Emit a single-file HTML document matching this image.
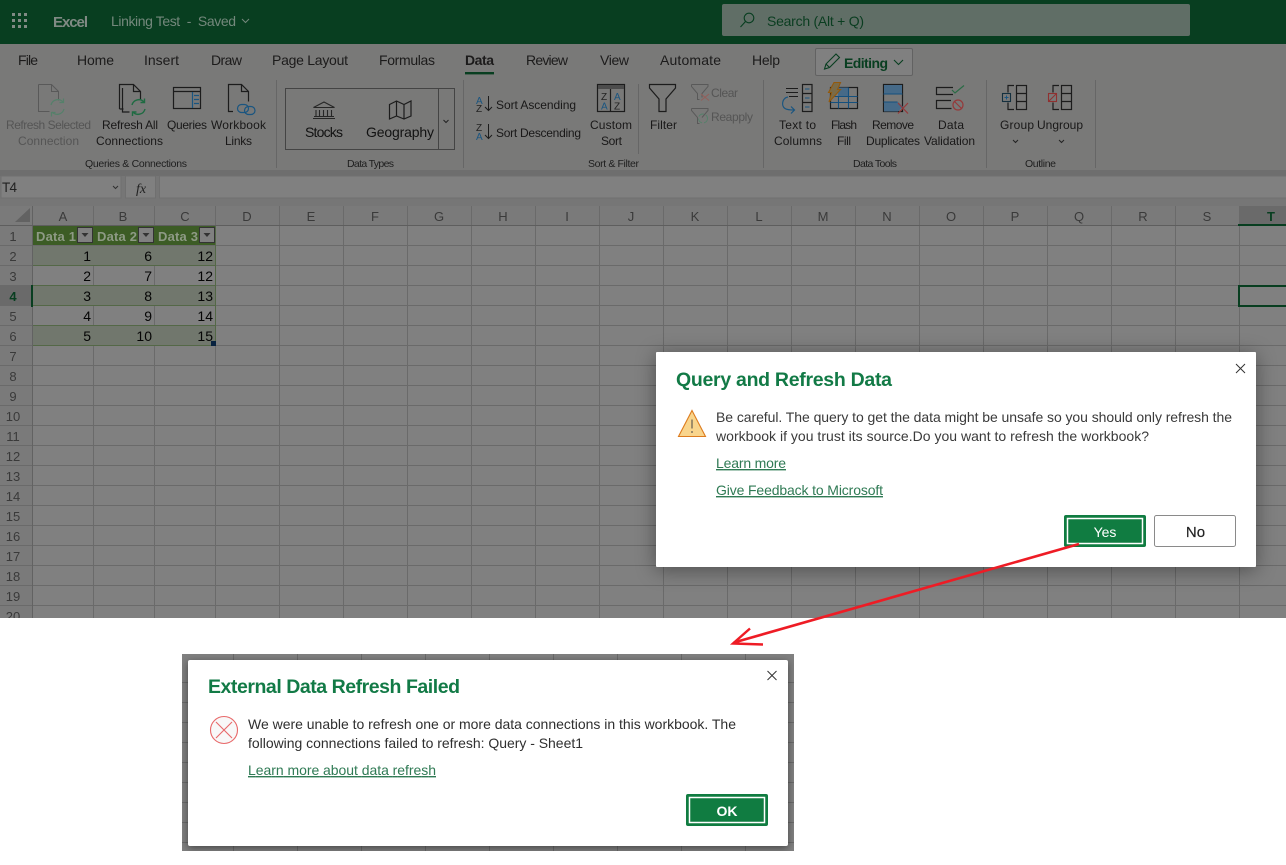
<!DOCTYPE html>
<html><head><meta charset="utf-8"><title>Excel</title>
<style>
html,body{margin:0;padding:0;background:#fff;width:1286px;height:865px;overflow:hidden}
body{position:relative}
svg{display:block;position:absolute;left:0;top:0}
#strip{position:absolute;left:0;top:618px;width:1286px;height:247px;background:#fff}
text{font-family:"Liberation Sans",sans-serif;font-size:12px;fill:#191818;white-space:pre}
.tab{font-size:14px;fill:#1c1b1b}
.dis{fill:#555}
.grp{font-size:10.5px;fill:#1e1e1e}
.big{font-size:14px;fill:#121212}
.h{font-size:13px;fill:#3a3a3a;text-anchor:middle}
.r{font-size:13px;fill:#3a3a3a;text-anchor:middle}
.d{font-size:14px;fill:#050505;text-anchor:end}
.th{font-size:13px;font-weight:bold;fill:#8e9a85}
.title{font-size:19.5px;font-weight:bold;fill:#127a46}
.body{font-size:14px;fill:#3a3a3a}
.lnk{font-size:14px;fill:#2f7a54;text-decoration:underline}
.ln{fill:none;stroke:#1c1c1c;stroke-width:1.2}
.gr{fill:none;stroke:#595959;stroke-width:1}
.dlg{position:absolute;background:#fff;border-radius:1px}
#d1{left:656px;top:352px;width:600px;height:215px;box-shadow:0 3px 20px rgba(0,0,0,.4)}
#w2{position:absolute;left:182px;top:654px;width:612px;height:197px;overflow:hidden;background:#808080}
#d2{left:6px;top:6px;width:600px;height:186px;border-radius:2px;box-shadow:0 2px 8px rgba(0,0,0,.45)}
</style></head><body>
<svg id="page" width="1286" height="865" viewBox="0 0 1286 865" xmlns="http://www.w3.org/2000/svg">
<rect width="1286" height="618" fill="#808080"/>

<!-- top bar -->
<rect width="1286" height="44" fill="#083e20"/>
<g fill="#808a84"><rect x="12" y="13" width="3" height="3"/><rect x="18" y="13" width="3" height="3"/><rect x="24" y="13" width="3" height="3"/><rect x="12" y="19" width="3" height="3"/><rect x="18" y="19" width="3" height="3"/><rect x="24" y="19" width="3" height="3"/><rect x="12" y="25" width="3" height="3"/><rect x="18" y="25" width="3" height="3"/><rect x="24" y="25" width="3" height="3"/></g>
<text x="53" y="27" textLength="35" style="font-size:15px;font-weight:bold;fill:#808a84">Excel</text>
<text x="111" y="26" textLength="125" style="font-size:14px;fill:#74887c">Linking Test  -  Saved</text>
<path d="M242 19l3.5 3.5L249 19" fill="none" stroke="#74887c"/>
<rect x="722" y="4" width="468" height="32" rx="2" fill="#606e66"/>
<circle cx="749" cy="18" r="4.8" fill="none" stroke="#083e20" stroke-width="1.1"/><path d="M745.5 21.5L740.5 27" stroke="#083e20" stroke-width="1.1"/>
<text x="767" y="26" textLength="97" style="font-size:14px;fill:#0a3d20">Search (Alt + Q)</text>

<!-- ribbon -->
<rect y="44" width="1286" height="126" fill="#797978"/>
<rect y="170" width="1286" height="6" fill="#6e6e6e"/>
<rect y="176" width="1286" height="30" fill="#767676"/>
<text class="tab" x="18" y="65" textLength="20">File</text>
<text class="tab" x="77" y="65" textLength="37">Home</text>
<text class="tab" x="144" y="65" textLength="35">Insert</text>
<text class="tab" x="211" y="65" textLength="31">Draw</text>
<text class="tab" x="272" y="65" textLength="76">Page Layout</text>
<text class="tab" x="379" y="65" textLength="56">Formulas</text>
<text class="tab" x="465" y="65" textLength="29" style="font-weight:bold">Data</text>
<rect x="465" y="72" width="29" height="2.4" fill="#083e20"/>
<text class="tab" x="526" y="65" textLength="42">Review</text>
<text class="tab" x="600" y="65" textLength="29">View</text>
<text class="tab" x="660" y="65" textLength="61">Automate</text>
<text class="tab" x="752" y="65" textLength="28">Help</text>
<rect x="815.5" y="48.5" width="97" height="27" rx="1.5" fill="#808080" stroke="#626262"/>
<path d="M824.5 69l1.5-5 10-10 3.5 3.5-10 10zM826 64l3.5 3.5" fill="none" stroke="#083e20" stroke-width="1.1"/>
<text x="844" y="68" textLength="44" style="font-size:14px;font-weight:bold;fill:#083e20">Editing</text>
<path d="M894 60l4.5 4.5L903 60" fill="none" stroke="#083e20" stroke-width="1.1"/>

<path d="M276.5 80v88M463.5 80v88M638.5 84v70M763.5 80v88M986.5 80v88M1095.5 80v88" stroke="#666" fill="none"/>

<!-- Refresh Selected -->
<path class="gr" d="M38.5 84.5h13l7 7v9M51.5 84.5v7h7M38.5 84.5v27h11"/>
<g fill="none" stroke="#55806a" stroke-width="1.2"><path d="M51 105a7 7 0 0 1 12-3M64 109a7 7 0 0 1-12 3"/><path d="M63.5 98.5v4h-4M51.5 116.5v-4h4"/></g>
<text class="dis" x="6" y="129" textLength="85">Refresh Selected</text>
<text class="dis" x="18" y="145" textLength="61">Connection</text>
<!-- Refresh All -->
<path class="ln" d="M122.5 88v24h7M119.5 109V84.5h14l7 7v8M133.5 84.5v7h7M119.5 109h4"/>
<g fill="none" stroke="#1f6b42" stroke-width="1.4"><path d="M132 105a7 7 0 0 1 12-3M145 109a7 7 0 0 1-12 3"/><path d="M144.5 98.5v4h-4M132.5 116v-4h4"/></g>
<text x="102" y="129" textLength="56">Refresh All</text>
<text x="96" y="145" textLength="67">Connections</text>
<!-- Queries -->
<rect x="173.5" y="87.5" width="27" height="21" class="ln"/><path class="ln" d="M173.5 91.5h27"/>
<path d="M192.5 92v16M194 95.5h5M194 99.5h5M194 103.5h5" fill="none" stroke="#1a5580" stroke-width="1.2"/>
<text x="167" y="129" textLength="40">Queries</text>
<!-- Workbook links -->
<path class="ln" d="M233 111.5h-4.5V84.5h13l7 7v10M241.5 84.5v7h7"/>
<g fill="none" stroke="#1a5580" stroke-width="1.2"><rect x="237.5" y="104.5" width="11" height="8" rx="4"/><rect x="244.5" y="106.5" width="10.5" height="8" rx="4"/></g>
<text x="211" y="129" textLength="55">Workbook</text>
<text x="225" y="145" textLength="27">Links</text>
<text class="grp" x="85" y="167" textLength="102">Queries &amp; Connections</text>

<!-- Data types -->
<rect x="285.5" y="88.5" width="169" height="61" fill="none" stroke="#444"/><path d="M438.5 88.5v61" stroke="#444"/>
<path d="M443.5 120l2.500 2.500 2.500-2.500" fill="none" stroke="#222"/>
<path d="M313.5 107.5l10.5-5.5 10.5 5.5zM316 110v6M319.5 110v6M323.5 110v6M327.5 110v6M331.5 110v6M314 116.5h20M313 118.5h22" fill="none" stroke="#262626" stroke-width="1.1"/>
<path class="ln" d="M389.5 104.5l7-3.5 7.5 3.5 7-3.5v15l-7 3-7.5-3-7 3zM396.5 101v15M404 104.5v14.5"/>
<text class="big" x="305" y="137" textLength="38">Stocks</text>
<text class="big" x="366" y="137" textLength="68">Geography</text>
<text class="grp" x="347" y="167" textLength="47">Data Types</text>

<!-- Sort -->
<text x="476" y="104" textLength="7" style="font-size:10px;fill:#1a5580">A</text><text x="476" y="112" textLength="7" style="font-size:10px;fill:#222">Z</text>
<text x="476" y="131" textLength="7" style="font-size:10px;fill:#222">Z</text><text x="476" y="140" textLength="7" style="font-size:10px;fill:#1a5580">A</text>
<path d="M488.5 96v14.5M485 107l3.5 3.5 3.5-3.5M488.5 124v14.5M485 135l3.5 3.5 3.5-3.5" fill="none" stroke="#1c1c1c"/>
<text x="496" y="109" textLength="80">Sort Ascending</text>
<text x="496" y="137" textLength="85">Sort Descending</text>
<rect x="597.5" y="84.5" width="27" height="27" class="ln"/><rect x="598" y="85" width="26" height="4" fill="#4c4c4c"/><path class="ln" d="M610.5 89v22"/>
<text x="601" y="100" style="font-size:10px;fill:#222">Z</text><text x="601" y="109.5" style="font-size:10px;fill:#1a5580">A</text>
<text x="614" y="100" style="font-size:10px;fill:#1a5580">A</text><text x="614" y="109.5" style="font-size:10px;fill:#222">Z</text>
<text x="590" y="129" textLength="42">Custom</text>
<text x="601" y="145" textLength="21">Sort</text>
<path class="ln" d="M649.5 84.5h26v3.5l-9.5 11v12.5h-7V99l-9.5-11z"/>
<text x="650" y="129" textLength="27">Filter</text>
<path class="gr" d="M691.5 84.5h16.5v2l-6 7v4M691.5 84.5v2l6 7v6h2"/>
<path d="M701 94l8 6.5M709 94l-8 6.5" stroke="#935f5a" stroke-width="1.1"/>
<text class="dis" x="711" y="97" textLength="27">Clear</text>
<path class="gr" d="M691.5 108.5h16.5v2l-6 7M691.5 108.5v2l6 7v6h2"/>
<circle cx="703" cy="118.5" r="4.5" fill="none" stroke="#55806a" stroke-dasharray="6 2"/>
<text class="dis" x="711" y="121" textLength="42">Reapply</text>
<text class="grp" x="588" y="167" textLength="51">Sort &amp; Filter</text>

<!-- Data tools -->
<path d="M786 88.5h12M786 92.5h12M789 96.5h9" fill="none" stroke="#1c1c1c"/>
<rect x="802.5" y="84.5" width="9.5" height="27" class="ln"/><path class="ln" d="M802.5 93.5h9.5M802.5 102.5h9.5"/>
<path d="M805 89h4.5M805 98h4.5M805 107h4.5" stroke="#1a5580"/>
<path d="M788 97c-6 1-7 9-3 11.5 2 1.3 5 1.5 9 1.5M791 106.5l3.5 3.5-3.5 3.5" fill="none" stroke="#1a5580" stroke-width="1.2"/>
<text x="779" y="129" textLength="37">Text to</text>
<text x="774" y="145" textLength="48">Columns</text>
<rect x="830.5" y="87.5" width="27" height="21" class="ln"/><path d="M838 87.5h11v9h-11z" fill="#466a88"/><path d="M830.5 96.5h27M830.5 102.5h27M838.5 96v12.5M848.5 87.5v21" fill="none" stroke="#14507e" stroke-width="1.1"/>
<path d="M834 82.5h6.500l-3 7h3L829 102l2.500-9.500H828.500z" fill="#7a6b48" stroke="#93590c" stroke-width="1.1"/>
<text x="831" y="129" textLength="26">Flash</text>
<text x="837" y="145" textLength="14">Fill</text>
<path class="ln" d="M883.5 84.500h19v27h-19z" stroke-width="1.1"/>
<rect x="884" y="85" width="18" height="9" fill="#466a88"/><path d="M883.5 94h19" stroke="#14507e"/>
<path d="M884 102h14l5 4.500-5 5h-14z" fill="#466a88"/><path d="M883.500 102h14" stroke="#14507e"/>
<path d="M898 103l10 10.500M908 103l-10 10.500" stroke="#95393a" stroke-width="1.2"/>
<text x="872" y="129" textLength="42">Remove</text>
<text x="866" y="145" textLength="54">Duplicates</text>
<path class="ln" d="M953 87.500h-16.500v7h16.500M951 100.500h-14.500v8h15"/>
<path d="M952 90l3 3 9-7.500" fill="none" stroke="#2a6b45" stroke-width="1.2"/>
<circle cx="958" cy="105" r="5" fill="none" stroke="#95393a" stroke-width="1.2"/><path d="M954.500 101.500l7 7" stroke="#95393a" stroke-width="1.2"/>
<text x="938" y="129" textLength="26">Data</text>
<text x="924" y="145" textLength="51">Validation</text>
<text class="grp" x="853" y="167" textLength="44">Data Tools</text>

<!-- Outline -->
<rect x="1016.5" y="85.5" width="10" height="24" class="ln"/><path class="ln" d="M1016.5 93.5h10M1016.5 101.5h10M1014 85.5h-6v7M1014 109.5h-6v-7"/>
<rect x="1002.5" y="93.5" width="8" height="8" fill="none" stroke="#14303f" stroke-width="1.1"/><path d="M1004.5 97.5h4M1006.5 95.5v4" stroke="#1a5580"/>
<rect x="1061.5" y="85.5" width="10" height="24" class="ln"/><path class="ln" d="M1061.5 93.5h10M1061.5 101.5h10M1059 85.5h-6v7M1059 109.5h-6v-7"/>
<rect x="1048.5" y="93.5" width="8" height="8" fill="none" stroke="#8f3030" stroke-width="1.1"/><path d="M1049 101l7-7" stroke="#8f3030"/>
<text x="1000" y="129" textLength="34">Group</text>
<text x="1037" y="129" textLength="46">Ungroup</text>
<path d="M1013 140l2.500 2.500 2.500-2.500M1059 140l2.500 2.500 2.500-2.500" fill="none" stroke="#222"/>
<text class="grp" x="1025" y="167" textLength="31">Outline</text>

<!-- formula bar -->
<rect x="1" y="176" width="120" height="22" fill="#808080" stroke="#707070"/>
<text x="2" y="192" textLength="15" style="font-size:13.5px;fill:#222">T4</text>
<path d="M113 186l2.500 2.500 2.500-2.500" fill="none" stroke="#303030"/>
<rect x="125.5" y="176" width="30" height="22" fill="#808080" stroke="#707070"/>
<text x="136" y="193" style="font-family:'Liberation Serif',serif;font-style:italic;font-size:14px;fill:#222">fx</text>
<rect x="159.5" y="176" width="1130" height="22" fill="#808080" stroke="#707070"/>

<!-- grid -->
<rect x="0" y="206" width="1286" height="19" fill="#7a7a7a"/>
<rect x="0" y="225" width="32" height="393" fill="#7a7a7a"/>
<rect x="1239" y="206" width="47" height="19" fill="#6a6a6a"/>
<rect x="0" y="286" width="32" height="20" fill="#6a6a6a"/>
<path fill="none" stroke="#6a6a6a" shape-rendering="crispEdges" d="M0 245.5H1286M0 265.5H1286M0 285.5H1286M0 305.5H1286M0 325.5H1286M0 345.5H1286M0 365.5H1286M0 385.5H1286M0 405.5H1286M0 425.5H1286M0 445.5H1286M0 465.5H1286M0 485.5H1286M0 505.5H1286M0 525.5H1286M0 545.5H1286M0 565.5H1286M0 585.5H1286M0 605.5H1286M93.5 206V618M154.5 206V618M215.5 206V618M279.5 206V618M343.5 206V618M407.5 206V618M471.5 206V618M535.5 206V618M599.5 206V618M663.5 206V618M727.5 206V618M791.5 206V618M855.5 206V618M919.5 206V618M983.5 206V618M1047.5 206V618M1111.5 206V618M1175.5 206V618M1239.5 206V618"/>
<rect x="32" y="206" width="1" height="412" fill="#626262"/>
<rect x="0" y="225" width="1286" height="1" fill="#5e5e5e"/>
<path d="M30 208v14H15z" fill="#626262"/>
<rect x="1238" y="224" width="48" height="2" fill="#083e20"/>
<rect x="31" y="285" width="2" height="22" fill="#083e20"/>
<rect x="1239" y="286" width="50" height="20" fill="none" stroke="#083e20" stroke-width="2"/>

<text class="h" x="63" y="221">A</text><text class="h" x="123" y="221">B</text><text class="h" x="185" y="221">C</text><text class="h" x="247" y="221">D</text><text class="h" x="311" y="221">E</text><text class="h" x="375" y="221">F</text><text class="h" x="439" y="221">G</text><text class="h" x="503" y="221">H</text><text class="h" x="567" y="221">I</text><text class="h" x="631" y="221">J</text><text class="h" x="695" y="221">K</text><text class="h" x="759" y="221">L</text><text class="h" x="823" y="221">M</text><text class="h" x="887" y="221">N</text><text class="h" x="951" y="221">O</text><text class="h" x="1015" y="221">P</text><text class="h" x="1079" y="221">Q</text><text class="h" x="1143" y="221">R</text><text class="h" x="1207" y="221">S</text><text class="h" x="1271" y="221" style="font-weight:bold;fill:#083e20">T</text>
<text class="r" x="13" y="241">1</text><text class="r" x="13" y="261">2</text><text class="r" x="13" y="281">3</text><text class="r" x="13" y="301" style="font-weight:bold;fill:#083e20">4</text><text class="r" x="13" y="321">5</text><text class="r" x="13" y="341">6</text><text class="r" x="13" y="361">7</text><text class="r" x="13" y="381">8</text><text class="r" x="13" y="401">9</text><text class="r" x="13" y="421">10</text><text class="r" x="13" y="441">11</text><text class="r" x="13" y="461">12</text><text class="r" x="13" y="481">13</text><text class="r" x="13" y="501">14</text><text class="r" x="13" y="521">15</text><text class="r" x="13" y="541">16</text><text class="r" x="13" y="561">17</text><text class="r" x="13" y="581">18</text><text class="r" x="13" y="601">19</text><text class="r" x="13" y="621">20</text>

<!-- table -->
<rect x="33" y="226" width="183" height="19" fill="#3c5c25"/>
<g fill="#71776d"><rect x="33" y="246" width="183" height="19"/><rect x="33" y="286" width="183" height="19"/><rect x="33" y="326" width="183" height="19"/></g>
<g fill="#546847"><rect x="33" y="265" width="183" height="1"/><rect x="33" y="285" width="183" height="1"/><rect x="33" y="305" width="183" height="1"/><rect x="33" y="325" width="183" height="1"/><rect x="33" y="345" width="183" height="1"/><rect x="215" y="226" width="1" height="120"/></g>
<text class="th" x="36" y="241" textLength="40">Data 1</text><text class="th" x="97" y="241" textLength="40">Data 2</text><text class="th" x="158" y="241" textLength="40">Data 3</text>
<g fill="#808080" stroke="#333"><rect x="77.5" y="227.5" width="15" height="15"/><rect x="138.5" y="227.5" width="15" height="15"/><rect x="199.5" y="227.5" width="15" height="15"/></g>
<path fill="#333" d="M81.5 233h7l-3.500 4zM142.500 233h7l-3.500 4zM203.500 233h7l-3.500 4z"/>
<text class="d" x="91" y="261">1</text><text class="d" x="152" y="261">6</text><text class="d" x="213" y="261">12</text>
<text class="d" x="91" y="281">2</text><text class="d" x="152" y="281">7</text><text class="d" x="213" y="281">12</text>
<text class="d" x="91" y="301">3</text><text class="d" x="152" y="301">8</text><text class="d" x="213" y="301">13</text>
<text class="d" x="91" y="321">4</text><text class="d" x="152" y="321">9</text><text class="d" x="213" y="321">14</text>
<text class="d" x="91" y="341">5</text><text class="d" x="152" y="341">10</text><text class="d" x="213" y="341">15</text>
<rect x="211" y="341" width="5" height="5" fill="#082240"/>
</svg>

<div id="strip"></div>
<div id="d1" class="dlg"></div>

<div id="w2">
<svg width="612" height="197" viewBox="182 654 612 197" xmlns="http://www.w3.org/2000/svg">
<path fill="none" stroke="#6a6a6a" shape-rendering="crispEdges" d="M233.5 654V851M297.5 654V851M361.5 654V851M425.5 654V851M489.5 654V851M553.5 654V851M617.5 654V851M681.5 654V851M745.5 654V851M182 682.5H794M182 702.5H794M182 722.5H794M182 742.5H794M182 762.5H794M182 782.5H794M182 802.5H794M182 822.5H794M182 842.5H794"/>
</svg>
<div id="d2" class="dlg"></div>
</div>

<svg width="1286" height="865" viewBox="0 0 1286 865" xmlns="http://www.w3.org/2000/svg">
<text class="title" x="676" y="386" textLength="216">Query and Refresh Data</text>
<path d="M692 410.5l13.5 26h-27z" fill="#f9d58c" stroke="#dd7c1e" stroke-width="1.1"/>
<path d="M691.5 419.5h1v9h-1zM691.5 431h1v2h-1z" fill="#444"/>
<text class="body" x="716" y="422" textLength="516">Be careful. The query to get the data might be unsafe so you should only refresh the</text>
<text class="body" x="716" y="441" textLength="433">workbook if you trust its source.Do you want to refresh the workbook?</text>
<text class="lnk" x="716" y="468" textLength="70">Learn more</text>
<text class="lnk" x="716" y="495" textLength="167">Give Feedback to Microsoft</text>
<path d="M1236 364l9 9M1245 364l-9 9" stroke="#333" stroke-width="1"/>
<rect x="1064" y="515" width="82" height="32" rx="2" fill="#107c41"/>
<rect x="1067.5" y="518.5" width="75" height="25" fill="#107c41" stroke="#fff" stroke-width="1.5"/>
<text x="1105" y="537" text-anchor="middle" style="font-size:14px;fill:#fff">Yes</text>
<rect x="1154.5" y="515.5" width="81" height="31" rx="2" fill="#fff" stroke="#8a8a8a"/>
<text x="1195.5" y="537" text-anchor="middle" style="font-size:15px;fill:#222;stroke:#222;stroke-width:.2">No</text>

<text class="title" x="208" y="693" textLength="252">External Data Refresh Failed</text>
<circle cx="224" cy="730" r="13.5" fill="#f8f8f8" stroke="#e8696a" stroke-width="1.1"/>
<path d="M216 722l16 16M232 722l-16 16" stroke="#e8696a" stroke-width="1.1"/>
<text class="body" x="248" y="729" textLength="488" style="fill:#2f2f2f">We were unable to refresh one or more data connections in this workbook. The</text>
<text class="body" x="248" y="748" textLength="335" style="fill:#2f2f2f">following connections failed to refresh: Query - Sheet1</text>
<text class="lnk" x="248" y="775" textLength="188">Learn more about data refresh</text>
<path d="M767.5 671l9 9M776.5 671l-9 9" stroke="#333" stroke-width="1"/>
<rect x="686" y="794" width="82" height="32" rx="2" fill="#107c41"/>
<rect x="689.5" y="797.5" width="75" height="25" fill="#107c41" stroke="#fff" stroke-width="1.5"/>
<text x="727" y="816" text-anchor="middle" style="font-size:14px;font-weight:bold;fill:#fff">OK</text>

<path d="M1079 544L734 642.5" stroke="#ee1c25" stroke-width="2.6" fill="none"/>
<path d="M750 628.5L733 643.5L763 644.5" stroke="#ee1c25" stroke-width="2.4" fill="none"/>
</svg>
</body></html>
